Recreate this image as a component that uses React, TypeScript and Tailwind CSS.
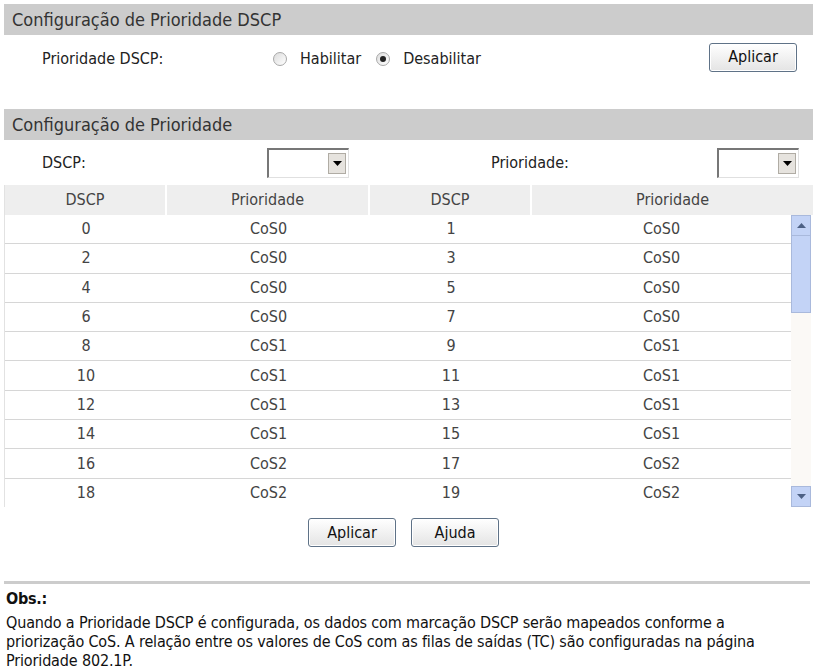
import React from "react";

const rows = Array.from({ length: 10 }, (_, i) => {
  const a = i * 2;
  const b = a + 1;
  return { a, b, ca: `CoS${Math.floor(a / 8)}`, cb: `CoS${Math.floor(b / 8)}` };
});

function Radio({ checked }: { checked?: boolean }) {
  return (
    <span className="inline-flex w-[14px] h-[14px] rounded-full border border-[#a8a8a8] bg-gradient-to-br from-[#dcdcdc] to-white items-center justify-center">
      {checked && <span className="w-[6px] h-[6px] rounded-full bg-[#222]" />}
    </span>
  );
}

function Select() {
  return (
    <div className="w-[82px] h-[30px] flex border-t-2 border-l-2 border-[#777] border-r border-b border-r-[#e0e0e0] border-b-[#e0e0e0] bg-white">
      <div className="flex-1" />
      <div className="w-[18px] my-[3px] mr-[2px] bg-[#e6e3de] border border-[#b0aca4] flex items-center justify-center">
        <svg width="9" height="5" viewBox="0 0 9 5">
          <path d="M0 0h9L4.5 5z" fill="#000" />
        </svg>
      </div>
    </div>
  );
}

function Btn({ children }: { children: React.ReactNode }) {
  return (
    <button className="w-[88px] h-[29px] rounded-[3px] border border-[#5f7287] bg-gradient-to-b from-white to-[#e4e4e4] text-[16px] text-[#111] shadow-[inset_0_0_0_1px_#fff]">
      {children}
    </button>
  );
}

function TitleBar({ children }: { children: React.ReactNode }) {
  return (
    <div className="h-[31px] bg-[#cccccc] pl-[8px] flex items-center text-[18px] text-[#333]">{children}</div>
  );
}

export default function App() {
  return (
    <div className="w-[817px] h-[672px] bg-white overflow-hidden text-[16px] text-[#222]" style={{ fontFamily: "Tahoma, 'DejaVu Sans Condensed', 'Liberation Sans', sans-serif" }}>
      {/* DSCP priority toggle */}
      <div className="pl-[4px] pr-[4px] pt-[4px]">
        <TitleBar>Configuração de Prioridade DSCP</TitleBar>
        <div className="h-[44px] flex items-center">
          <div className="w-[269px] pl-[38px] pt-[4px]">Prioridade DSCP:</div>
          <div className="flex items-center pt-[4px]">
            <Radio />
            <span className="ml-[13px] mr-[15px]">Habilitar</span>
            <Radio checked />
            <span className="ml-[13px]">Desabilitar</span>
          </div>
          <div className="ml-auto mr-[16px]">
            <Btn>Aplicar</Btn>
          </div>
        </div>
      </div>

      {/* Priority mapping */}
      <div className="pl-[4px] pr-[4px] mt-[30px]">
        <TitleBar>Configuração de Prioridade</TitleBar>
        <div className="h-[45px] flex items-center">
          <div className="w-[263px] pl-[38px]">DSCP:</div>
          <Select />
          <div className="w-[368px] pl-[142px]">Prioridade:</div>
          <Select />
        </div>

        <div className="border-l border-[#e2e2e2]">
          <div className="grid grid-cols-[162px_203px_162px_1fr] h-[30px] bg-[#eeeeee] text-[#444] items-stretch">
            <div className="flex items-center justify-center border-r-2 border-white">DSCP</div>
            <div className="flex items-center justify-center border-r-2 border-white">Prioridade</div>
            <div className="flex items-center justify-center border-r-2 border-white">DSCP</div>
            <div className="flex items-center justify-center">Prioridade</div>
          </div>
          <div className="h-[292px] flex overflow-hidden">
            <div className="w-[786px]">
              {rows.map((r) => (
                <div key={r.a} className="grid grid-cols-[162px_203px_162px_1fr] h-[29.3px] border-b border-[#d6d6d6] text-[#444]">
                  <div className="flex items-center justify-center">{r.a}</div>
                  <div className="flex items-center justify-center">{r.ca}</div>
                  <div className="flex items-center justify-center">{r.b}</div>
                  <div className="flex items-center justify-center">{r.cb}</div>
                </div>
              ))}
            </div>
            <div className="w-[20px] h-[292px] bg-[#fbf9f6] flex flex-col">
              <div className="h-[21px] bg-[#c3d3f6] border border-[#a9b9dc] flex items-center justify-center">
                <svg width="9" height="5" viewBox="0 0 9 5">
                  <path d="M0 5h9L4.5 0z" fill="#4d6185" />
                </svg>
              </div>
              <div className="h-[77px] bg-[#c3d3f6] border border-[#a9b9dc] border-t-0" />
              <div className="flex-1" />
              <div className="h-[21px] bg-[#c3d3f6] border border-[#a9b9dc] flex items-center justify-center">
                <svg width="9" height="5" viewBox="0 0 9 5">
                  <path d="M0 0h9L4.5 5z" fill="#4d6185" />
                </svg>
              </div>
            </div>
          </div>
        </div>

        <div className="flex justify-center gap-[15px] pr-[10px] mt-[11px]">
          <Btn>Aplicar</Btn>
          <Btn>Ajuda</Btn>
        </div>
      </div>

      {/* Notes */}
      <div className="pl-[4px] pr-[7px] mt-[34px]">
        <div className="h-[3px] bg-[#cccccc]" />
      </div>
      <div className="px-[6px] pt-[5px] leading-[19px] text-[#111]">
        <div className="font-bold text-[16px] tracking-[-0.3px]">Obs.:</div>
        <p className="mt-[5px] text-[16px] tracking-[-0.15px]">
          Quando a Prioridade DSCP é configurada, os dados com marcação DSCP serão mapeados conforme a
          <br />
          priorização CoS. A relação entre os valores de CoS com as filas de saídas (TC) são configuradas na página
          <br />
          Prioridade 802.1P.
        </p>
      </div>
    </div>
  );
}
